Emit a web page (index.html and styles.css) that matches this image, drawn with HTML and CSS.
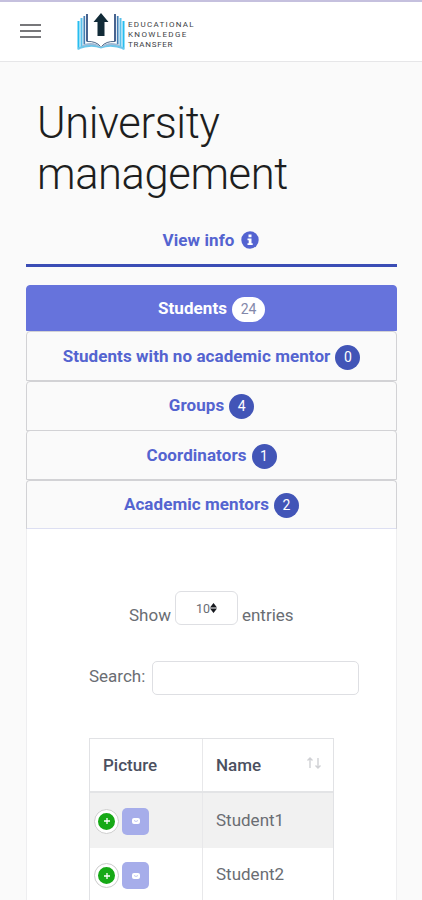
FILE: index.html
```html
<!DOCTYPE html>
<html lang="en">
<head>
<meta charset="utf-8">
<title>University management</title>
<link rel="stylesheet" href="styles.css">
</head>
<body>
<header class="topbar">
  <button class="menu" aria-label="Menu"><span></span><span></span><span></span></button>
  <a class="brand">
    <svg class="book" width="48" height="38" viewBox="0 0 48 38">
      <g fill="none" stroke-width="2">
        <path stroke="#27bdf0" d="M1.500 8V36.500M46.500 8V36.500"/>
        <path stroke="#58c0ea" d="M4.500 5V34M43.500 5V34"/>
        <path stroke="#437fb4" stroke-width="1.700" d="M7.300 3V31M40.700 3V31"/>
        <path stroke="#29497c" stroke-width="1.700" d="M10 1V28.500M38 1V28.500"/>
      </g>
      <path fill="#6cc6ea" d="M1 36.500V34.500Q13 29 24 34Q35 29 47 34.500V36.500Q34 31.500 24 35.500Q14 31.500 1 36.500Z"/>
      <path fill="#9fb9d4" d="M7 31Q18 28 23.500 34Q16 30.500 4 33.500ZM41 31Q30 28 24.500 34Q32 30.500 44 33.500Z"/>
      <path fill="none" stroke="#4b6788" stroke-width="1" d="M10 28.500Q19 28 23.500 33.500M38 28.500Q29 28 24.500 33.500"/>
      <path fill="#122b38" d="M24 0L31.500 9H27.500V23H20.500V9H16.500Z"/>
    </svg>
    <span class="brand-text"><span class="l1">EDUCATIONAL</span><span class="l2">KNOWLEDGE</span><span class="l3">TRANSFER</span></span>
  </a>
</header>
<main>
  <h1>University management</h1>
  <a class="view-info">View info
    <svg width="18" height="18" viewBox="0 0 18 18"><circle cx="9" cy="9" r="8.700" fill="#5363d1"/><path fill="#fff" d="M7.500 3.500h3v2.700h-3zM6.500 7.500h4v4.700h1.200v1.800H6.500v-1.800h1.200V9.300H6.500z"/></svg>
  </a>
  <nav class="tabs">
    <a class="tab active">Students <span class="badge">24</span></a>
    <a class="tab">Students with no academic mentor <span class="badge">0</span></a>
    <a class="tab">Groups <span class="badge">4</span></a>
    <a class="tab">Coordinators <span class="badge">1</span></a>
    <a class="tab">Academic mentors <span class="badge">2</span></a>
  </nav>
  <section class="panel">
    <div class="length">
      <span>Show</span>
      <span class="select">10<svg width="7" height="10" viewBox="0 0 7 10"><path fill="#17191f" d="M0 4.500L3.500 0 7 4.500zM0 5.500h7L3.500 10z"/></svg></span>
      <span>entries</span>
    </div>
    <label class="search"><span>Search:</span><input type="text"></label>
    <div class="table">
      <div class="row head">
        <div class="cell">Picture</div>
        <div class="cell">Name
          <svg class="sort" width="14" height="12" viewBox="0 0 14 12"><path fill="none" stroke="#cfd0d4" stroke-width="1.400" d="M3 11V1M.5 3.500L3 1l2.500 2.500M11 1v10M8.500 8.500L11 11l2.500-2.500"/></svg>
        </div>
      </div>
      <div class="row odd">
        <div class="cell pic"><span class="plus"><svg width="8" height="8" viewBox="0 0 8 8"><path stroke="#fff" stroke-width="1.300" d="M4 1v6M1 4h6"/></svg></span><span class="avatar"><svg width="8" height="6" viewBox="0 0 8 6"><rect width="8" height="6" rx="2" fill="#fff"/><path d="M2 2.500l2 1 2-1" fill="none" stroke="#a6adea" stroke-width=".7"/></svg></span></div>
        <div class="cell">Student1</div>
      </div>
      <div class="row">
        <div class="cell pic"><span class="plus"><svg width="8" height="8" viewBox="0 0 8 8"><path stroke="#fff" stroke-width="1.300" d="M4 1v6M1 4h6"/></svg></span><span class="avatar"><svg width="8" height="6" viewBox="0 0 8 6"><rect width="8" height="6" rx="2" fill="#fff"/><path d="M2 2.500l2 1 2-1" fill="none" stroke="#a6adea" stroke-width=".7"/></svg></span></div>
        <div class="cell">Student2</div>
      </div>
    </div>
  </section>
</main>
</body>
</html>
```
FILE: styles.css
```css
* { box-sizing: border-box; }
html { height: 100%; overflow: hidden; }
body {
  margin: 0;
  height: 900px;
  overflow: hidden;
  display: flex;
  flex-direction: column;
  background: #fafafa;
  font-family: Roboto, "Liberation Sans", sans-serif;
  font-size: 17px;
  color: #6a6d73;
}
svg { display: block; flex: none; }
.topbar {
  flex: none;
  height: 62px;
  display: flex;
  align-items: flex-start;
  background: #fff;
  border-top: 2px solid #c5c0de;
  border-bottom: 1px solid #e6e6e8;
}
.menu {
  display: flex;
  flex-direction: column;
  gap: 4px;
  width: 21px;
  margin: 22px 0 0 20px;
  padding: 0;
  border: 0;
  background: none;
}
.menu span { width: 21px; height: 2px; background: #77777a; }
.brand { display: flex; margin: 11px 0 0 36px; }
.brand-text {
  display: flex;
  flex-direction: column;
  margin: 7px 0 0 3px;
  font-size: 8px;
  line-height: 10px;
  font-weight: 400;
  color: #3c4145;
  white-space: nowrap;
}
.l1 { letter-spacing: 1.3px; }
.l2 { letter-spacing: 1.35px; }
.l3 { letter-spacing: .75px; }
main { flex: none; height: 838px; padding: 36px 25px 0 26px; }
h1 {
  margin: 0 0 0 11px;
  width: 300px;
  font-size: 43.5px;
  line-height: 51px;
  letter-spacing: -.4px;
  font-weight: 300;
  color: #1d1e20;
}
.view-info {
  display: flex;
  justify-content: center;
  align-items: center;
  gap: 6px;
  height: 67px;
  padding: 16px 2px 0 0;
  border-bottom: 3px solid #3b4db5;
  font-weight: 700;
  letter-spacing: .1px;
  color: #5464d0;
}
.tabs { margin-top: 18px; }
.tab {
  display: flex;
  justify-content: center;
  align-items: center;
  gap: 5px;
  height: 50px;
  margin-bottom: -.5px;
  padding-bottom: 1px;
  border: 1px solid #d2d2d5;
  border-radius: 4px 4px 0 0;
  background: #fafafa;
  font-weight: 700;
  letter-spacing: .07px;
  color: #5464d0;
}
.tab.active { height: 46px; margin: 0; padding: 0; background: #6673dc; border-color: #6673dc; color: #fff; }
.tab:last-child { border-bottom: 2px solid #dddff2; }
.badge {
  min-width: 25px;
  height: 25px;
  margin-top: 3px;
  border-radius: 13px;
  background: #4255b7;
  color: #fff;
  font-size: 14px;
  line-height: 25px;
  font-weight: 400;
  letter-spacing: 0;
  text-align: center;
}
.active .badge { width: 33px; background: #fff; color: #8388aa; }
.panel {
  height: 371px;
  padding: 62px 0 0 62px;
  background: #fff;
  border: solid #eeeef0;
  border-width: 0 1px;
}
.length { display: flex; gap: 4px; margin-left: 40px; height: 34px; line-height: 48px; }
.select {
  display: flex;
  align-items: center;
  justify-content: center;
  width: 63px;
  height: 34px;
  border: 1px solid #dedfe3;
  border-radius: 6px;
  font-size: 12.5px;
  line-height: 15px;
}
.search { display: flex; margin-top: 36px; height: 34px; line-height: 31px; }
.search span { width: 63px; }
.search input { width: 207px; height: 34px; border: 1px solid #dedfe3; border-radius: 5px; background: #fff; }
.table { width: 245px; margin-top: 43px; border: 1px solid #e1e2e5; border-bottom: 0; }
.row { display: flex; height: 54.5px; }
.head { height: 54px; border-bottom: 2px solid #e3e4e6; font-weight: 500; color: #4b5060; }
.odd { background: #f1f1f1; }
.cell { display: flex; align-items: center; width: 112px; padding-left: 13px; padding-bottom: 1px; }
.cell + .cell { width: 131px; border-left: 1px solid #e8e8ea; }
.sort { margin: -3px 0 0 46px; }
.pic { padding: 2px 0 0 4px; gap: 3px; }
.plus {
  display: flex;
  align-items: center;
  justify-content: center;
  width: 25px;
  height: 25px;
  border: 4px solid #fff;
  outline: 1px solid #cccccc;
  outline-offset: -1px;
  border-radius: 50%;
  background: #16a916;
}
.avatar { display: flex; align-items: center; justify-content: center; width: 27px; height: 27px; border-radius: 5px; background: #a6adea; }
```
